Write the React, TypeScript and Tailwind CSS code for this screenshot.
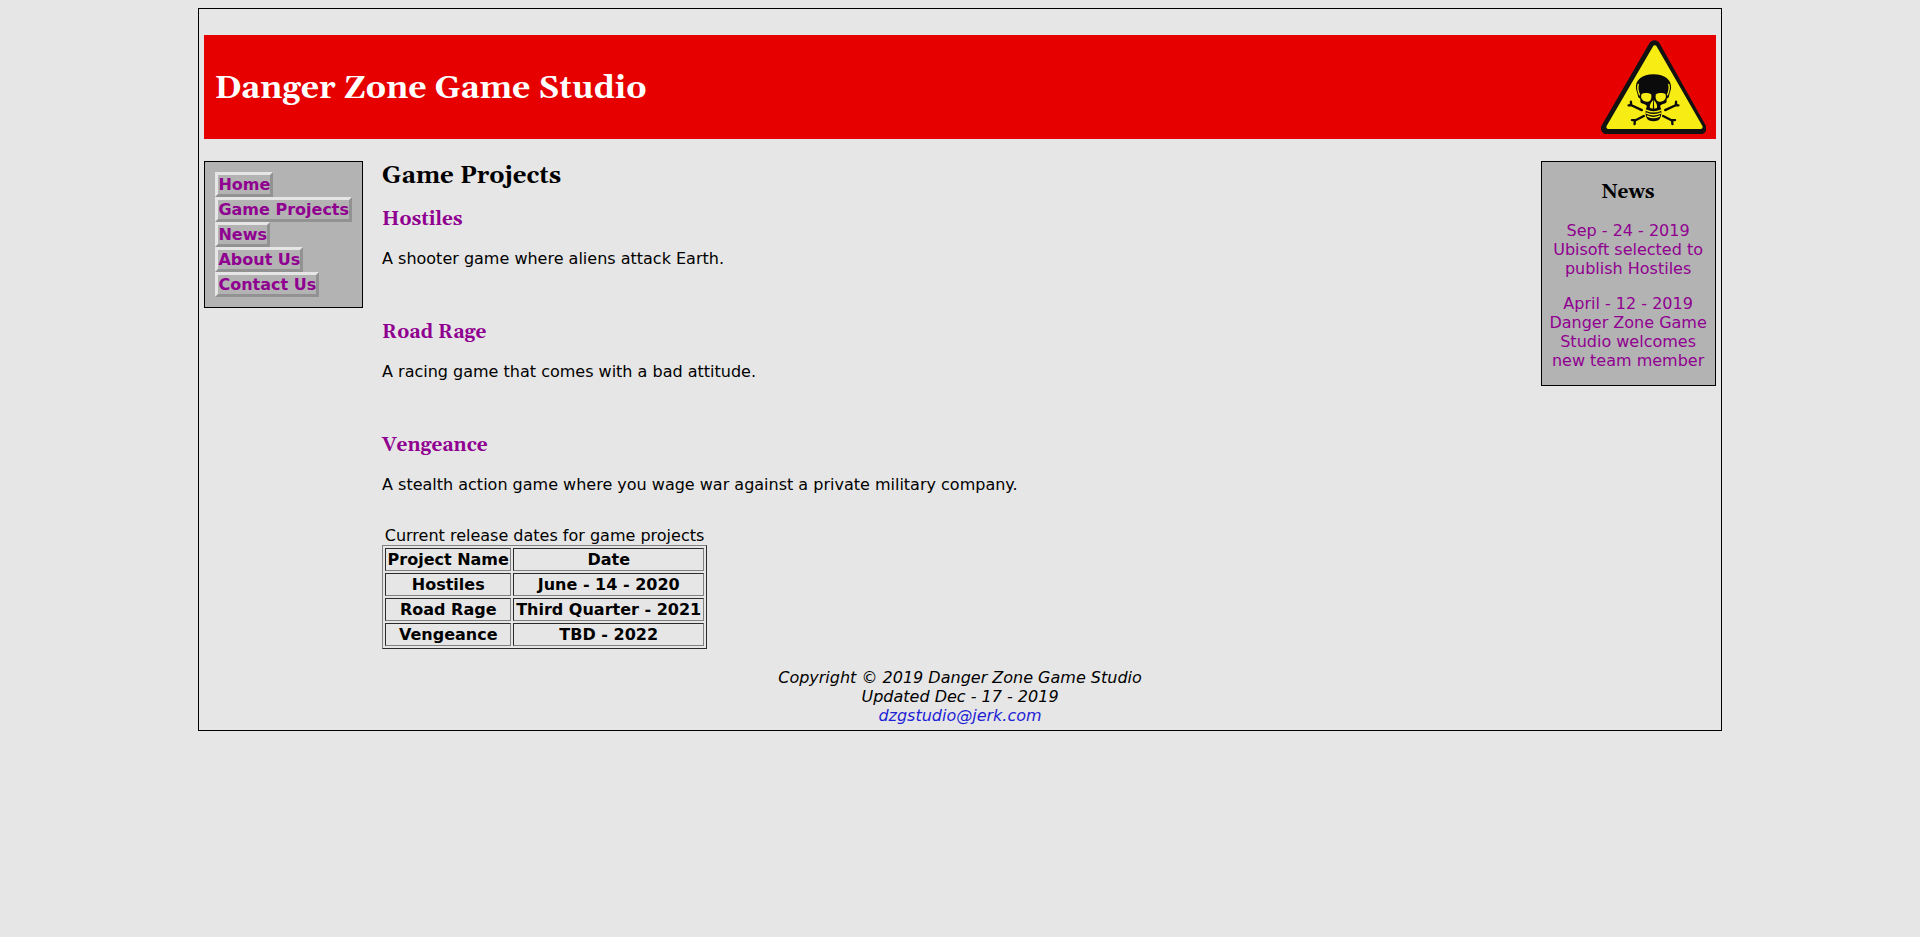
const serif = "font-['Gelasio','Georgia','Liberation_Serif',serif] font-bold";
const purple = "text-[#900090]";

const navItems = ["Home", "Game Projects", "News", "About Us", "Contact Us"];

const projects = [
  { name: "Hostiles", text: "A shooter game where aliens attack Earth." },
  { name: "Road Rage", text: "A racing game that comes with a bad attitude." },
  {
    name: "Vengeance",
    text: "A stealth action game where you wage war against a private military company.",
  },
];

const releases = [
  ["Hostiles", "June - 14 - 2020"],
  ["Road Rage", "Third Quarter - 2021"],
  ["Vengeance", "TBD - 2022"],
];

const news = [
  { date: "Sep - 24 - 2019", text: "Ubisoft selected to publish Hostiles" },
  { date: "April - 12 - 2019", text: "Danger Zone Game Studio welcomes new team member" },
];

function DangerSign() {
  return (
    <svg viewBox="0 0 316 283" className="h-[94px] w-[105px]" role="img" aria-label="Danger sign">
      <path d="M161 18 17 266H300Z" fill="#111" stroke="#111" strokeWidth="35" strokeLinejoin="round" />
      <path d="M162 22 22 262H300Z" fill="#f7ec13" stroke="#f7ec13" strokeWidth="12" strokeLinejoin="round" />
      <g transform="translate(63 79)">
        <g stroke="#0b0b0b" strokeWidth="7" strokeLinecap="round" fill="none">
          <path d="M25 116 60 132M20 118 30 118M27 107 28 117" />
          <path d="M165 116 130 132M170 118 160 118M163 107 162 117" />
          <path d="M38 164 66 150M30 162H40M38 174 39 164" />
          <path d="M152 164 124 150M160 162H150M152 174 151 164" />
        </g>
        <path
          d="M95 24C60 24 42 41 42 63C42 72 47 80 48 88C48 94 51 96 55 97L56 109C62 114 72 113 75 120L72 130C70 145 72 158 82 163Q95 168 108 163C118 158 120 145 118 130L115 120C118 113 128 114 134 109L135 97C139 96 142 94 142 88C143 80 148 72 148 63C148 41 130 24 95 24Z"
          fill="#0b0b0b"
        />
        <path d="M59 84C67 79 80 80 88 84C90 94 88 103 81 106C73 108 64 106 60 99C57 94 57 89 59 84Z" fill="#f7ec13" />
        <path d="M131 84C123 79 110 80 102 84C100 94 102 103 109 106C117 108 126 106 130 99C133 94 133 89 131 84Z" fill="#f7ec13" />
        <path d="M94 102C87 109 82 119 85 126L93 128ZM96 102C103 109 108 119 105 126L97 128Z" fill="#f7ec13" />
        <g stroke="#f7ec13" fill="none" strokeLinecap="round">
          <path d="M49 55Q45 68 53 86M141 55Q145 68 137 86" strokeWidth="4" />
          <path d="M72 132Q95 143 118 132M74 141Q95 151 116 141M77 150Q95 159 113 150" strokeWidth="4" />
        </g>
      </g>
    </svg>
  );
}

export default function App() {
  return (
    <div className="min-h-screen bg-[#e6e6e6] px-2 pt-2 font-['DejaVu_Sans','Verdana',sans-serif] text-base leading-[19px] text-black">
      <div className="mx-auto w-4/5 border border-black p-[5px]">
        <header className="mt-[21px] flex items-center justify-between bg-[#e60000] px-[10px] py-[5px]">
          <h1 className={`${serif} pt-1 text-[32px] leading-9 text-white`}>Danger Zone Game Studio</h1>
          <DangerSign />
        </header>

        <div className="mt-[22px] flex items-start">
          <nav className="shrink-0 border border-black bg-[#b3b3b3] p-[10px]">
            <ul className="flex flex-col items-start">
              {navItems.map((item) => (
                <li key={item} className="flex">
                  <a
                    href="#"
                    className={`${purple} border-3 border-t-[#e6e6e6] border-r-[#929292] border-b-[#929292] border-l-[#e6e6e6] font-bold whitespace-nowrap`}
                  >
                    {item}
                  </a>
                </li>
              ))}
            </ul>
          </nav>

          <main className="ml-[19px] grow">
            <h2 className={`${serif} text-2xl leading-[31px]`}>Game Projects</h2>
            <div className="mt-4 flex flex-col gap-[53px]">
              {projects.map((p) => (
                <section key={p.name}>
                  <h3 className={`${serif} ${purple} text-[19px] leading-[23px]`}>
                    <a href="#">{p.name}</a>
                  </h3>
                  <p className="mt-[18px]">{p.text}</p>
                </section>
              ))}
            </div>
            <table className="mt-8 min-w-[325px] border-separate border-spacing-[2px] border border-t-[#808080] border-r-[#2b2b2b] border-b-[#2b2b2b] border-l-[#808080] text-center font-bold">
              <caption className="font-normal whitespace-nowrap">Current release dates for game projects</caption>
              <tbody>
                <tr>
                  {["Project Name", "Date"].map((h) => (
                    <th
                      key={h}
                      scope="col"
                      className="border border-t-[#2b2b2b] border-r-[#808080] border-b-[#808080] border-l-[#2b2b2b] p-px"
                    >
                      {h}
                    </th>
                  ))}
                </tr>
                {releases.map((row) => (
                  <tr key={row[0]}>
                    {row.map((cell) => (
                      <td
                        key={cell}
                        className="border border-t-[#2b2b2b] border-r-[#808080] border-b-[#808080] border-l-[#2b2b2b] p-px"
                      >
                        {cell}
                      </td>
                    ))}
                  </tr>
                ))}
              </tbody>
            </table>
          </main>

          <aside className="w-[175px] shrink-0 border border-black bg-[#b3b3b3] px-1 pt-[19px] pb-[15px] text-center">
            <h3 className={`${serif} text-[19px] leading-[23px]`}>News</h3>
            <div className="mt-[17px] flex flex-col gap-4">
              {news.map((n) => (
                <p key={n.date}>
                  <a href="#" className={purple}>
                    {n.date}
                    <br />
                    {n.text}
                  </a>
                </p>
              ))}
            </div>
          </aside>
        </div>

        <footer className="mt-[19px] text-center italic">
          <p>Copyright © 2019 Danger Zone Game Studio</p>
          <p>Updated Dec - 17 - 2019</p>
          <p>
            <a href="mailto:dzgstudio@jerk.com" className="text-[#1f1fd6]">
              dzgstudio@jerk.com
            </a>
          </p>
        </footer>
      </div>
    </div>
  );
}
